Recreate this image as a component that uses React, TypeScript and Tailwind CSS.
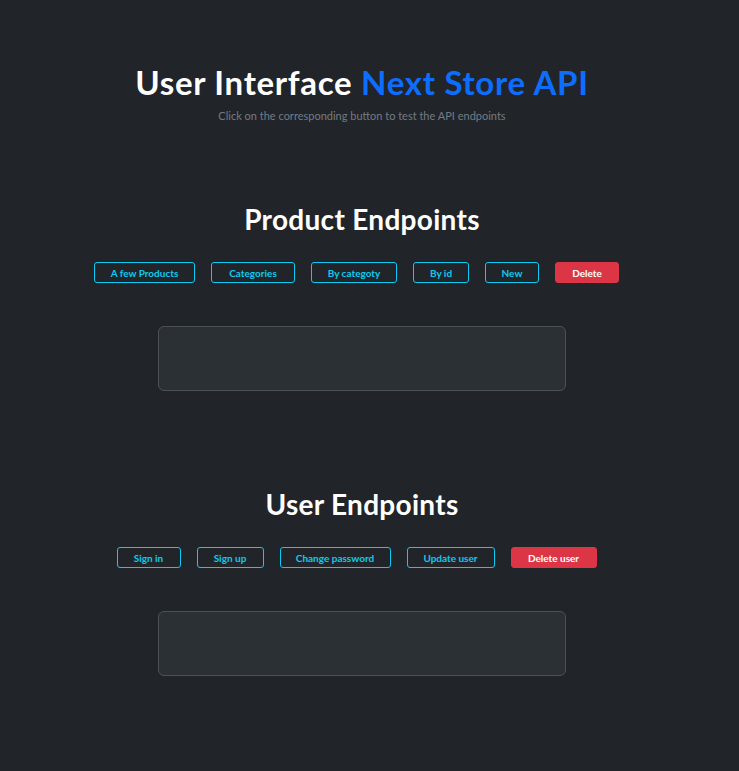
import React from 'react';

const productButtons = [
    { label: 'A few Products', w: 'w-[101px]', danger: false },
    { label: 'Categories', w: 'w-[84px]', danger: false },
    { label: 'By categoty', w: 'w-[86px]', danger: false },
    { label: 'By id', w: 'w-[56px]', danger: false },
    { label: 'New', w: 'w-[54px]', danger: false },
    { label: 'Delete', w: 'w-[64px]', danger: true },
];

const userButtons = [
    { label: 'Sign in', w: 'w-[64px]', danger: false },
    { label: 'Sign up', w: 'w-[67px]', danger: false },
    { label: 'Change password', w: 'w-[111px]', danger: false },
    { label: 'Update user', w: 'w-[88px]', danger: false },
    { label: 'Delete user', w: 'w-[86px]', danger: true },
];

function EndpointSection({ title, buttons, className }: { title: string; buttons: typeof userButtons; className?: string }) {
    return (
        <section className={`flex flex-col items-center ${className ?? ''}`}>
            <h2 className="text-[28px] leading-[34px] font-bold tracking-[0.3px] text-white">{title}</h2>
            <div className="mt-[26px] flex justify-center gap-4 pr-[11px]">
                {buttons.map(b => (
                    <button key={b.label}
                        className={`${b.w} h-[21px] rounded-[3px] border text-[10px] font-bold leading-none ${b.danger ? 'bg-[#dc3545] border-[#dc3545] text-white' : 'border-[#0dcaf0] text-[#0dcaf0]'}`}>
                        {b.label}
                    </button>
                ))}
            </div>
            <div className="mt-[43px] w-[408px] h-[65px] rounded-md border border-[#4b5157] bg-[#2b3035]" />
        </section>
    );
}

export default function App() {
    return (
        <div className="min-h-[771px] w-full bg-[#212529] font-['Lato',sans-serif]">
            <div className="w-[724px] flex flex-col items-center pt-[62px]">
                <h1 className="text-[33px] leading-[40px] font-bold tracking-[0.7px] text-white">
                    User Interface <span className="text-[#0d6efd]">Next Store API</span>
                </h1>
                <p className="mt-[6px] text-[11px] leading-[16px] text-[#737b83]">Click on the corresponding button to test the API endpoints</p>

                <EndpointSection title="Product Endpoints" buttons={productButtons} className="mt-[78px]" />
                <EndpointSection title="User Endpoints" buttons={userButtons} className="mt-[96px]" />
            </div>
        </div>
    );
}
